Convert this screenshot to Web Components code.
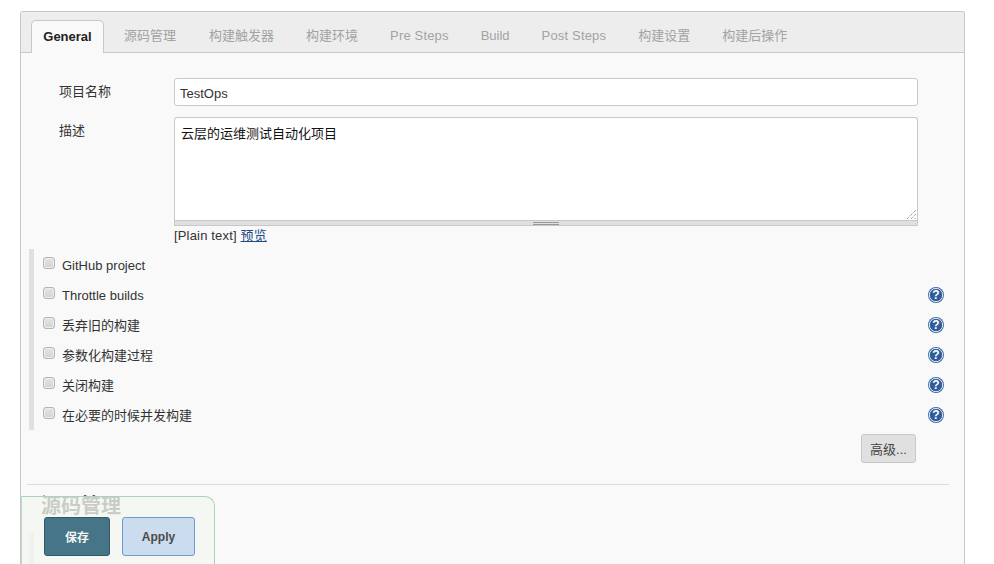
<!DOCTYPE html>
<html>
<head>
<meta charset="utf-8">
<style>
  html, body { margin: 0; height: 100%; overflow: hidden; background: #fff; }
  body { font: 13px "Liberation Sans", "Noto Sans CJK SC", sans-serif; color: #333; }
</style>
</head>
<body>
<job-config>
  <config-tabs slot="tabs"></config-tabs>
  <form-row label="项目名称"><text-box value="TestOps"></text-box></form-row>
  <form-row label="描述" class="desc"><desc-box></desc-box></form-row>
  <option-list>
    <check-row>GitHub project</check-row>
    <check-row help>Throttle builds</check-row>
    <check-row help cjk>丢弃旧的构建</check-row>
    <check-row help cjk>参数化构建过程</check-row>
    <check-row help cjk>关闭构建</check-row>
    <check-row help cjk>在必要的时候并发构建</check-row>
  </option-list>
  <advanced-row></advanced-row>
  <section-head>源码管理</section-head>
  <option-list style="margin-top: 14px; height: 40px;"></option-list>
</job-config>
<save-bar></save-bar>

<script>
const FONT = '"Liberation Sans", "Noto Sans CJK SC", sans-serif';

class JobConfig extends HTMLElement {
  constructor() {
    super();
    this.attachShadow({ mode: 'open' }).innerHTML = `
      <style>
        :host { display: block; box-sizing: border-box; height: 564px; padding: 11px 29px 0 20px; }
        .card { border: 1px solid #c8c8c8; border-bottom: 0; border-radius: 3px 3px 0 0; height: 100%; background: #f9f9f9; box-sizing: border-box; overflow: hidden; }
        .body { padding: 25px 15px 0 6px; }
      </style>
      <div class="card">
        <slot name="tabs"></slot>
        <div class="body"><slot></slot></div>
      </div>`;
  }
}

class ConfigTabs extends HTMLElement {
  constructor() {
    super();
    const names = ['源码管理', '构建触发器', '构建环境', 'Pre Steps', 'Build', 'Post Steps', '构建设置', '构建后操作'];
    this.attachShadow({ mode: 'open' }).innerHTML = `
      <style>
        :host { display: flex; height: 41px; box-sizing: border-box; padding: 8px 0 0 10px; background: #ededed; border-bottom: 1px solid #c8c8c8; font: 13px ${FONT}; }
        div { height: 33px; line-height: 31px; padding: 0 16px; color: #a3a3a3; white-space: nowrap; }
        div:nth-child(3) { padding: 0 17px 0 15px; }
        .latin { letter-spacing: .17px; }
        .on { box-sizing: border-box; height: 33px; width: 73px; padding: 0; text-align: center; margin-right: 5px; background: #f9f9f9; color: #222; font-weight: bold; border: 1px solid #c8c8c8; border-bottom: 0; border-radius: 5px 5px 0 0; }
      </style>
      <div class="on">General</div>${names.map(n => `<div class="${/Steps/.test(n) ? 'latin' : ''}">${n}</div>`).join('')}`;
  }
}

class FormRow extends HTMLElement {
  constructor() {
    super();
    this.attachShadow({ mode: 'open' }).innerHTML = `
      <style>
        :host { display: grid; grid-template-columns: 115px 744px; padding-left: 32px; margin-bottom: 11px; color: #333; }
        .label { padding-top: 3px; font: 13px ${FONT}; }
      </style>
      <div class="label"></div><div><slot></slot></div>`;
    this.shadowRoot.querySelector('.label').textContent = this.getAttribute('label');
  }
}

class TextBox extends HTMLElement {
  constructor() {
    super();
    this.attachShadow({ mode: 'open' }).innerHTML = `
      <style>
        :host { display: block; box-sizing: border-box; height: 28px; padding: 0 5px; background: #fff; border: 1px solid #c8c8c8; border-radius: 3px; font: 13px/29px ${FONT}; color: #333; }
      </style><span></span>`;
    this.shadowRoot.querySelector('span').textContent = this.getAttribute('value');
  }
}

class DescBox extends HTMLElement {
  constructor() {
    super();
    this.attachShadow({ mode: 'open' }).innerHTML = `
      <style>
        :host { display: block; font: 13px ${FONT}; }
        .area { position: relative; box-sizing: border-box; height: 103px; padding: 5px 6px; background: #fff; border: 1px solid #c8c8c8; border-bottom: 0; border-radius: 3px 3px 0 0; color: #111; }
        .area svg { position: absolute; right: 1px; bottom: 1px; }
        .grip { box-sizing: border-box; height: 6px; background: #e0e0e0; border: 1px solid #c8c8c8; display: flex; justify-content: center; align-items: center; }
        .grip i { display: block; width: 26px; height: 1px; border-top: 1px solid #999; border-bottom: 1px solid #999; }
        .foot { margin-top: 1px; height: 17px; line-height: 17px; color: #333; letter-spacing: .17px; }
        a { color: #204a87; text-decoration: underline; }
      </style>
      <div class="area">云层的运维测试自动化项目
        <svg width="9" height="9" viewBox="0 0 9 9"><path d="M0 9L9 0M4 9L9 4M7.500 9L9 7.500" stroke="#777" stroke-width="1" stroke-dasharray="1 1" fill="none"/></svg>
      </div>
      <div class="grip"><i></i></div>
      <div class="foot">[Plain text] <a href="#">预览</a></div>`;
  }
}

class OptionList extends HTMLElement {
  constructor() {
    super();
    this.attachShadow({ mode: 'open' }).innerHTML = `
      <style>
        :host { display: block; margin: -6px 0 0 2px; border-left: 5px solid #e0e0e0; height: 181px; padding-top: 1px; box-sizing: border-box; }
      </style><slot></slot>`;
  }
}

class CheckRow extends HTMLElement {
  constructor() {
    super();
    const help = this.hasAttribute('help') ? `
      <svg class="q" width="16" height="16" viewBox="0 0 16 16">
        <circle cx="8" cy="8" r="8" fill="#3a67a3"/>
        <circle cx="8" cy="8" r="6.700" fill="none" stroke="#e3eaf4" stroke-width="1"/>
        <circle cx="8" cy="8" r="5.700" fill="#2f5b99"/>
        <text x="8" y="12.200" text-anchor="middle" font-family="Liberation Sans" font-weight="bold" font-size="12" fill="#fff">?</text>
      </svg>` : '';
    this.attachShadow({ mode: 'open' }).innerHTML = `
      <style>
        :host { display: flex; align-items: center; height: 30px; padding-left: 9px; padding-right: 15px; font: 13px ${FONT}; color: #333; }
        :host([cjk]) .text { margin-top: -2px; }
        .box { flex: none; box-sizing: border-box; width: 12px; height: 12px; margin: -5px 7px 0 0; border: 1px solid #b4b4b4; border-radius: 3px; background: linear-gradient(#e4e4e4, #d4d4d4); box-shadow: inset 0 0 0 1px #eee; }
        .text { flex: 1; }
        .q { flex: none; margin-right: -10px; }
      </style>
      <span class="box"></span><span class="text"><slot></slot></span>${help}`;
  }
}

class AdvancedRow extends HTMLElement {
  constructor() {
    super();
    this.attachShadow({ mode: 'open' }).innerHTML = `
      <style>
        :host { display: flex; justify-content: flex-end; padding: 4px 33px 0 0; }
        button { box-sizing: border-box; width: 55px; height: 29px; padding: 0; background: #e0e0e0; border: 1px solid #c8c8c8; border-radius: 3px; color: #444; font: 13px ${FONT}; }
      </style>
      <button>高级...</button>`;
  }
}

class SectionHead extends HTMLElement {
  constructor() {
    super();
    this.attachShadow({ mode: 'open' }).innerHTML = `
      <style>
        :host { display: block; margin: 21px 0 0 0; padding: 8px 0 0 14px; border-top: 1px solid #ddd; font: bold 20px/26px ${FONT}; color: #333; }
      </style><slot></slot>`;
  }
}

class SaveBar extends HTMLElement {
  constructor() {
    super();
    this.attachShadow({ mode: 'open' }).innerHTML = `
      <style>
        :host { position: fixed; left: 21px; top: 496px; box-sizing: border-box; width: 194px; height: 80px; padding: 20px 0 0 22px; display: flex; gap: 12px; align-items: flex-start; background: rgba(243, 247, 240, .78); border: 1px solid #a9d3bb; border-bottom: 0; border-left-color: #b8dcc6; border-radius: 0 10px 0 0; font: bold 12px ${FONT}; }
        button { box-sizing: border-box; height: 39px; padding: 0; border-radius: 3px; font: inherit; }
        .save { width: 66px; background: #457586; border: 1px solid #30586a; color: #f4f4f4; }
        .apply { width: 73px; background: #cadcee; border: 1px solid #6c9bd0; color: #4a4a4a; }
      </style>
      <button class="save">保存</button><button class="apply">Apply</button>`;
  }
}

customElements.define('job-config', JobConfig);
customElements.define('config-tabs', ConfigTabs);
customElements.define('form-row', FormRow);
customElements.define('text-box', TextBox);
customElements.define('desc-box', DescBox);
customElements.define('option-list', OptionList);
customElements.define('check-row', CheckRow);
customElements.define('advanced-row', AdvancedRow);
customElements.define('section-head', SectionHead);
customElements.define('save-bar', SaveBar);
</script>
</body>
</html>
